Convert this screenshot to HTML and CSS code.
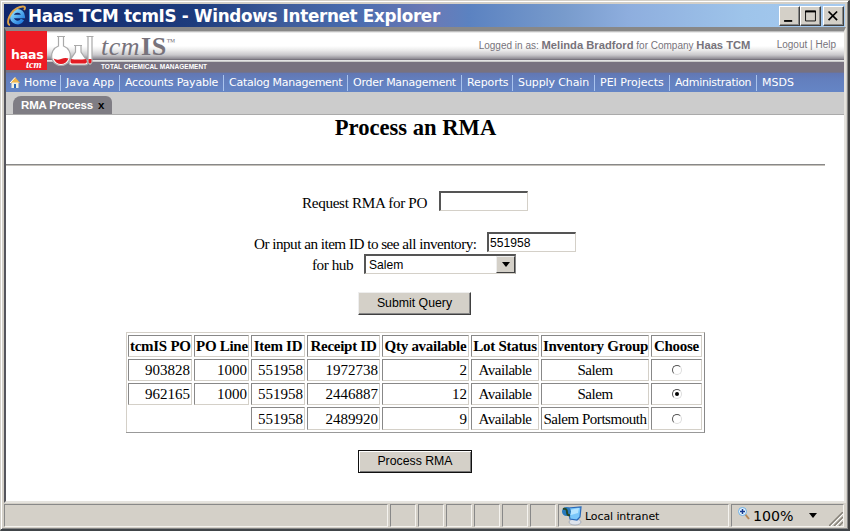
FILE: index.html
```html
<!DOCTYPE html>
<html lang="en">
<head>
<meta charset="utf-8">
<title>Haas TCM tcmIS</title>
<link rel="stylesheet" href="styles.css">
</head>
<body>
<div class="window">
  <header class="titlebar">
    <svg class="ie" viewBox="0 0 21 21"><defs><linearGradient id="blue" x2="1" y2="1"><stop stop-color="#8de0ff"/><stop offset="1" stop-color="#1b77dc"/></linearGradient></defs><path d="M16.500 14.500C13.500 20 5.500 17.500 5.800 11 6.100 4.500 16.700 3.600 17.200 11.500H7" fill="none" stroke="url(#blue)" stroke-width="3.600"/><path d="M4 20C-1 19 4 5 14 2 19 .6 20 2.500 18 5" fill="none" stroke="#dca24a" stroke-width="1.900"/></svg>
    <h1>Haas TCM tcmIS - Windows Internet Explorer</h1>
    <div class="controls">
      <button aria-label="Minimize"><svg viewBox="0 0 20 20"><path d="M4 15.500H13" stroke="#000" stroke-width="2"/></svg></button>
      <button aria-label="Maximize"><svg viewBox="0 0 20 20"><path d="M4.500 4.500H15.500V15.500H4.500Z" fill="none" stroke="#000"/><path d="M4 5H16" stroke="#000" stroke-width="2"/></svg></button>
      <button class="close" aria-label="Close"><svg viewBox="0 0 20 20"><path d="M4.500 5 14 14.500M14 5 4.500 14.500" stroke="#000" stroke-width="1.900"/></svg></button>
    </div>
  </header>
  <main class="page">
    <div class="banner">
      <div class="haas"><b>haas</b><i>tcm</i></div>
      <svg class="flasks" viewBox="0 0 47 35"><g fill="#fff" stroke="#aaa" stroke-width="1.200"><path d="M7 2.500H15M8.500 3V12C-2 16 0 31.500 11 31.500S24 16 13.500 12V3"/><path d="M24 11.500H32M25.500 12V18L19.500 27Q18 31 22 31H35Q39 31 37 27L31 18V12"/><path d="M36.500 2.500H43.500M38 3V28Q40 33 42 28V3"/></g><path d="M3.500 24.500Q7 26.500 11 25 15 23.500 18.500 24.500 16 30 11 30T3.500 24.500ZM21 25Q28 26 36 25L37 28Q36 29.500 35 29.500H22Q19.500 29 21 25ZM38.500 25H41.500V28Q40 31 38.500 28Z" fill="#e31b23"/></svg>
      <div class="brand"><div class="wordmark"><i>tcm</i><b>IS</b><sup>™</sup></div><div class="tagline">TOTAL CHEMICAL MANAGEMENT</div></div>
      <div class="session"><span class="who">Logged in as: <b>Melinda Bradford</b> for Company <b>Haas TCM</b></span><span class="links">Logout | Help</span></div>
    </div>
    <nav class="menu">
      <a class="home"><svg viewBox="0 0 10 11"><path d="M5 0 10 6H0Z" fill="#f1b64a"/><path d="M1.500 5.500H8.500V11H1.500Z" fill="#f2eee0"/><path d="M4 7H6V11H4Z" fill="#2b69b8"/><path d="M0 6 5 .5" stroke="#fff"/></svg>Home</a>
      <a class="java">Java App</a><a class="accounts">Accounts Payable</a><a class="catalog">Catalog Management</a><a class="order">Order Management</a><a class="reports">Reports</a><a class="supply">Supply Chain</a><a class="pei">PEI Projects</a><a class="admin">Administration</a><a class="msds">MSDS</a>
    </nav>
    <div class="tabs"><div class="tab">RMA Process <b>x</b></div></div>
    <section class="content">
      <h2>Process an RMA</h2>
      <hr>
      <form>
        <div class="row po"><label>Request RMA for PO</label><div class="field"></div></div>
        <div class="row item"><label>Or input an item ID to see all inventory:</label><div class="field">551958</div></div>
        <div class="row hub"><label>for hub</label><div class="field select">Salem<span class="arrow"></span></div></div>
        <button type="button" class="btn submit">Submit Query</button>
        <table>
          <colgroup><col class="c1"><col class="c2"><col class="c3"><col class="c4"><col class="c5"><col class="c6"><col class="c7"><col class="c8"></colgroup>
          <tr><th>tcmIS PO</th><th>PO Line</th><th>Item ID</th><th>Receipt ID</th><th>Qty available</th><th>Lot Status</th><th>Inventory Group</th><th>Choose</th></tr>
          <tr><td>903828</td><td>1000</td><td>551958</td><td>1972738</td><td>2</td><td class="mid">Available</td><td class="mid">Salem</td><td class="mid"><span class="radio"></span></td></tr>
          <tr><td>962165</td><td>1000</td><td>551958</td><td>2446887</td><td>12</td><td class="mid">Available</td><td class="mid">Salem</td><td class="mid"><span class="radio on"></span></td></tr>
          <tr class="last"><td class="none"></td><td class="none"></td><td>551958</td><td>2489920</td><td>9</td><td class="mid">Available</td><td class="mid">Salem Portsmouth</td><td class="mid"><span class="radio"></span></td></tr>
        </table>
        <button type="button" class="btn process">Process RMA</button>
      </form>
    </section>
  </main>
  <footer class="status">
    <div class="pane wide"></div><div class="pane"></div><div class="pane"></div><div class="pane"></div><div class="pane"></div><div class="pane"></div><div class="pane"></div>
    <div class="pane zone"><svg viewBox="0 0 20 20"><ellipse cx="13" cy="16" rx="6" ry="3" fill="#dde3ec" stroke="#8b95a8" stroke-width=".6"/><path d="M6 2 19 1 18 11 15 14 8 13Z" fill="#79c6fa" stroke="#2869b9" stroke-width="1.200"/><path d="M8 4 17 2 16 7 9 9Z" fill="#b5e4ff"/><circle cx="4.500" cy="5.500" r="4.500" fill="#287abd"/><path d="M1 3Q5 2 5 6T8 9" stroke="#25482b" stroke-width="2" fill="none"/></svg><span>Local intranet</span></div>
    <div class="pane zoom"><svg viewBox="0 0 12 13"><path d="M7 7 11 12" stroke="#b88855" stroke-width="2"/><circle cx="4.500" cy="4.500" r="4" fill="#e9f6ff" stroke="#6caee4"/><path d="M4.500 2V7M2 4.500H7" stroke="#163b91" stroke-width="1.500"/></svg><span>100%</span><i class="down"></i>
    <svg class="grip" viewBox="0 0 14 14"><path d="M0 14 14 0M5 14 14 5M10 14 14 10" stroke="#858078" stroke-width="1.500"/><path d="M2 14 14 2M7 14 14 7" stroke="#fff"/></svg></div>
  </footer>
</div>
</body>
</html>
```
FILE: styles.css
```css
* { box-sizing: border-box; }
body { margin: 0; width: 850px; height: 531px; overflow: hidden; background: #d4d0c8; }
svg { display: block; }
button { padding: 0; font: inherit; color: inherit; }
.window { width: 850px; height: 531px; padding: 1px 2px 0 1px; border: 1px solid #d4d0c8; border-right: 2px solid #404040; border-bottom: 2px solid #404448; background: #d4d0c8; box-shadow: inset 1px 1px #fff, inset -1px -1px #888; display: flex; flex-direction: column; }
.titlebar { height: 23px; margin: 2px 0 0 2px; width: 841px; display: flex; align-items: center; background: linear-gradient(90deg, #10266b 0, #1d3c7d 190px, #3e5c9b 280px, #496caf 350px, #6b79b5 425px, #5b82c1 465px, #789bcc 560px, #8eaede 625px, #9ec4ea 740px, #a6caf0); }
.ie { width: 21px; height: 21px; margin-left: 2px; flex: none; }
.titlebar h1 { margin: 0 0 0 1px; width: 600px; font: bold 16.8px/24px "DejaVu Sans", sans-serif; letter-spacing: -.31px; color: #fff; white-space: nowrap; flex: none; }
.controls { margin: 0 1px 0 auto; display: flex; }
.controls button { width: 21px; height: 20px; border: 1px solid; border-color: #fff #404040 #404040 #fff; background: #d4d0c8; box-shadow: inset -1px -1px #888; }
.controls .close { margin-left: 2px; }
.controls svg { width: 19px; height: 18px; }
.page { margin-left: 2px; width: 842px; height: 476px; border: 2px solid; border-color: #888 #e5e3de #e5e3de #55555c; border-top-width: 4px; background: #fff; }
.banner { height: 42px; display: flex; background: linear-gradient(#aaa 0, #fff 2px, #fff 15px, #ececec 19px, #c9c8cb 24px, #8b8890 28px, #65616b 29px, #f1f1f1 29px, #bbb 31px, #787280 31px, #787280 41px, #6874a2 42px); }
.haas { width: 41px; height: 39px; padding-top: 18px; background: #ed1c24; color: #fff; flex: none; }
.haas b, .haas i { display: block; }
.haas b { padding-left: 5px; font: bold 12.5px/12px "DejaVu Sans", sans-serif; letter-spacing: -.2px; }
.haas i { padding-left: 20px; font: italic bold 10.5px/7px "Liberation Serif", serif; }
.flasks { width: 47px; height: 35px; margin: 3px 0 0 3px; flex: none; }
.brand { width: 150px; padding-left: 4px; height: 42px; flex: none; }
.wordmark { height: 31px; font: 26px/32px "Liberation Serif", serif; letter-spacing: .5px; color: #77737c; white-space: nowrap; }
.wordmark b { margin-left: 1px; }
.wordmark sup { display: inline-block; height: 10px; font-size: 9px; line-height: 10px; vertical-align: 10px; }
.tagline { font: bold 6.5px/9px "Liberation Sans", sans-serif; color: #fff; white-space: nowrap; }
.session { margin-left: auto; padding: 7px 8px 0 0; height: 28px; display: flex; font: 10px/14px "Liberation Sans", sans-serif; color: #77737b; white-space: nowrap; }
.session b { font-size: 11.2px; }
.who { width: 298px; }
.menu { height: 19px; display: flex; background: linear-gradient(#6277b3, #6380bf 8px, #6585c5); color: #fff; font: 11px/18px "DejaVu Sans", sans-serif; white-space: nowrap; }
.menu a { height: 16px; margin-top: 2px; padding-left: 5px; line-height: 15px; border-right: 1px solid #a9c3ed; flex: none; }
.menu svg { width: 10px; height: 11px; margin: 2px 4px 0 0; }
.menu .home { width: 55px; padding-left: 4px; display: flex; }
.menu .java { width: 59px; }
.menu .accounts { width: 104px; letter-spacing: -.22px; }
.menu .catalog { width: 124px; letter-spacing: -.27px; }
.menu .order { width: 114px; letter-spacing: -.27px; }
.menu .reports { width: 51px; letter-spacing: -.1px; }
.menu .supply { width: 82px; letter-spacing: -.1px; }
.menu .pei { width: 75px; }
.menu .admin { width: 87px; letter-spacing: -.3px; }
.menu .msds { border: 0; }
.tabs { height: 23px; background: #ccc; border-bottom: 1px solid #aaa; padding: 4px 0 0 7px; }
.tab { width: 99px; height: 18px; padding-left: 8px; border-radius: 8px 6px 0 0; background: #7f7d84; font: bold 11.5px/18px "Liberation Sans", sans-serif; letter-spacing: -.15px; color: #fff; white-space: nowrap; }
.tab b { margin-left: 2px; color: #000; }
.content { font: 15.2px/18px "Liberation Serif", serif; color: #000; }
h2 { width: 819px; margin: 0; padding-top: 1px; text-align: center; font-size: 22.6px; line-height: 24px; }
hr { width: 819px; margin: 24px 0 0; height: 2px; border: 0; border-top: 1px solid #888; border-bottom: 1px solid #c5c1ba; }
form { margin: 0; }
.row { display: flex; height: 20px; white-space: nowrap; }
.row label { padding-top: 3px; flex: none; }
.po { margin: 25px 0 0 296px; }
.po label { width: 137px; letter-spacing: -.34px; }
.item { margin: 21px 0 0 248px; }
.item label { width: 233px; letter-spacing: -.52px; }
.hub { margin: 2px 0 0 306px; }
.hub label { width: 52px; padding-top: 2px; letter-spacing: -.45px; }
.field { width: 89px; height: 20px; padding-left: 1px; border: 2px solid #555; border-right: 1px solid #d4d0c8; border-bottom: 1px solid #d4d0c8; font: 12.1px/18px "Liberation Sans", sans-serif; background: #fff; }
.select { width: 152px; padding-left: 3px; border-right: 1px solid #888; display: flex; justify-content: space-between; }
.arrow { width: 19px; height: 17px; border: 1px solid; border-color: #eee #404040 #404040 #eee; background: #d4d0c8; display: grid; place-items: center; }
.arrow::before, .down { content: ""; width: 0; height: 0; border: 4.5px solid transparent; border-top: 5px solid #000; border-bottom: 0; }
.btn { display: block; width: 113px; background: #d4d0c8; border: 1px solid; border-color: #eee #404040 #404040 #eee; box-shadow: inset -1px -1px #888; font: 12.3px/19px "Liberation Sans", sans-serif; }
.submit { height: 23px; margin: 18px 0 0 352px; }
.process { width: 114px; height: 23px; margin: 17px 0 0 352px; border-color: #111; box-shadow: inset 1px 1px #fff, inset -1px -1px #777; }
table { width: 579px; margin: 17px 0 0 120px; table-layout: fixed; border-collapse: separate; border-spacing: 2px; border: 1px solid #d4d0c8; border-left: 0; border-right-color: #888; border-bottom-color: #999; box-shadow: inset 1px 0 #d4d0c8; }
.c1 { width: 64px; } .c2 { width: 55px; } .c3 { width: 54px; } .c4 { width: 73px; } .c5 { width: 87px; } .c6 { width: 68px; } .c7 { width: 108px; } .c8 { width: 51px; }
th, td { height: 22px; padding: 0 1px; font-size: 15px; line-height: 20px; border: 1px solid; border-color: #888 #d4d0c8 #d4d0c8 #888; text-align: right; white-space: nowrap; }
th { letter-spacing: -.28px; }
.last td { height: 23px; }
th, .mid { text-align: center; }
.mid { letter-spacing: -.45px; }
.none { border-color: transparent; }
.radio { width: 10px; height: 10px; margin: 0 auto; border: 1.5px solid; border-color: #555 #ddd #ddd #555; border-radius: 50%; display: grid; place-items: center; }
.on::after { content: ""; width: 4px; height: 4px; background: #000; border-radius: 50%; }
.status { display: flex; height: 24px; margin: 1px 0 0 2px; gap: 2px; font-family: "DejaVu Sans", sans-serif; }
.pane { width: 26px; height: 23px; border: 1px solid; border-color: #888 #f5f3ef #f5f3ef #888; flex: none; display: flex; align-items: center; white-space: nowrap; }
.wide { width: 384px; }
.zone { width: 171px; padding-left: 3px; font-size: 11px; letter-spacing: -.1px; }
.zone span { padding-top: 1px; }
.zone svg { width: 20px; height: 20px; margin-right: 3px; }
.zoom { width: 113px; padding-left: 6px; font-size: 14.2px; }
.zoom svg { width: 12px; height: 13px; margin: -4px 3px 0 0; }
.down { margin: 0 0 0 15px; }
.zoom .grip { width: 14px; height: 14px; margin: 7px 0 0 auto; }
```
